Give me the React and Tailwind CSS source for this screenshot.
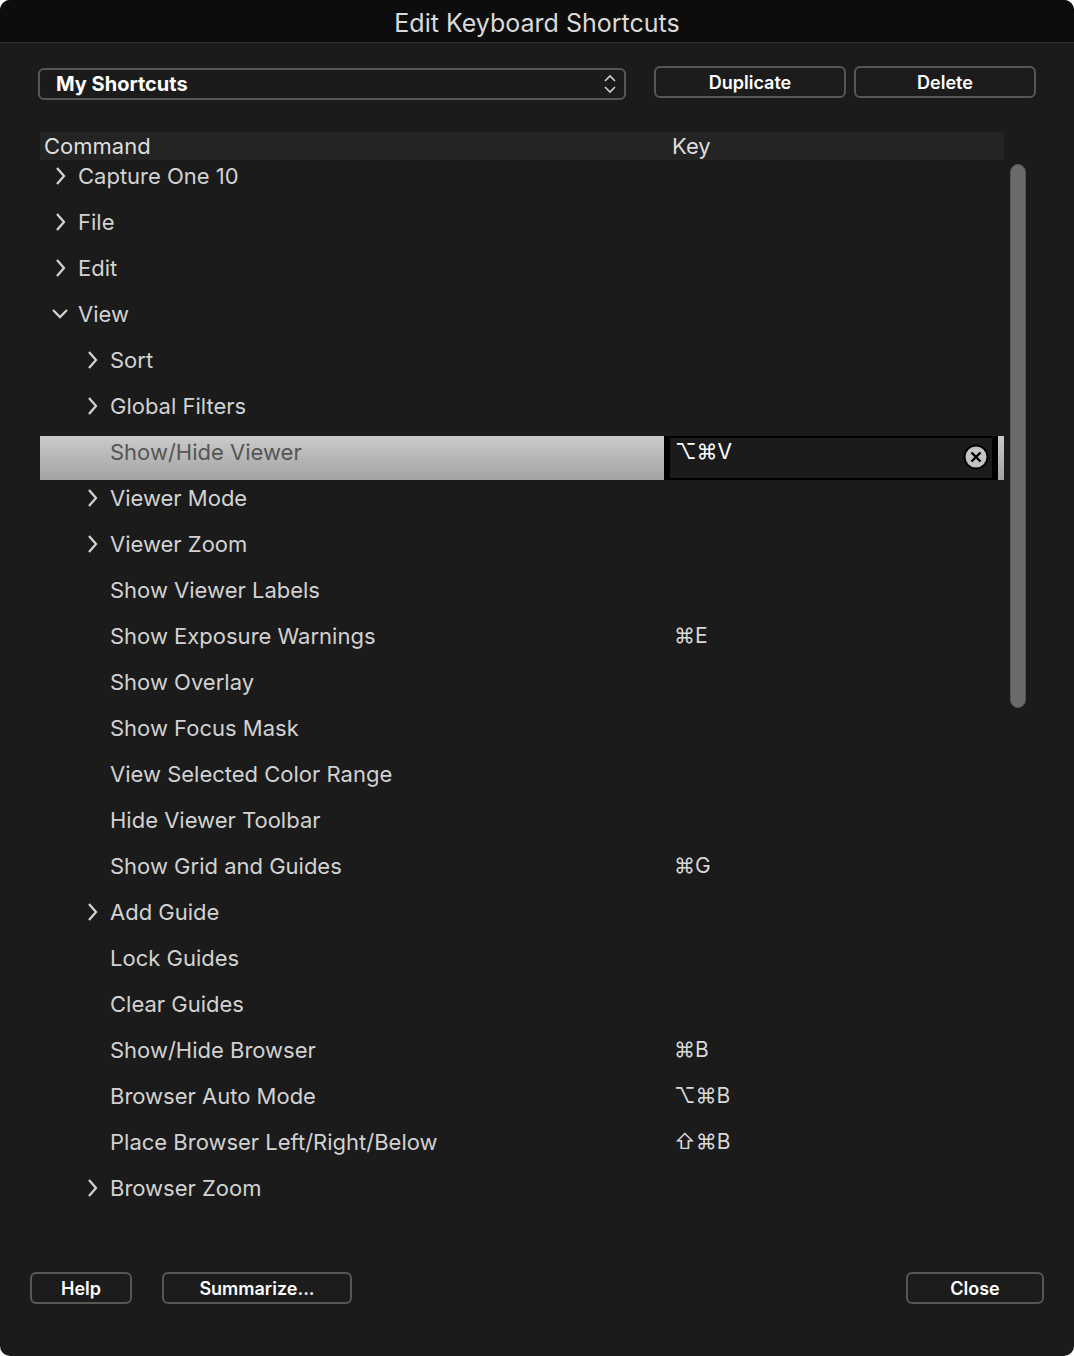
import React from "react";

const FONT = { fontFamily: "Inter, 'DejaVu Sans', sans-serif" };

const rows = [
  { label: "Capture One 10", level: 0, arrow: "right" },
  { label: "File", level: 0, arrow: "right" },
  { label: "Edit", level: 0, arrow: "right" },
  { label: "View", level: 0, arrow: "down" },
  { label: "Sort", level: 1, arrow: "right" },
  { label: "Global Filters", level: 1, arrow: "right" },
  { label: "Show/Hide Viewer", level: 1, key: "⌥⌘V", selected: true },
  { label: "Viewer Mode", level: 1, arrow: "right" },
  { label: "Viewer Zoom", level: 1, arrow: "right" },
  { label: "Show Viewer Labels", level: 1 },
  { label: "Show Exposure Warnings", level: 1, key: "⌘E" },
  { label: "Show Overlay", level: 1 },
  { label: "Show Focus Mask", level: 1 },
  { label: "View Selected Color Range", level: 1 },
  { label: "Hide Viewer Toolbar", level: 1 },
  { label: "Show Grid and Guides", level: 1, key: "⌘G" },
  { label: "Add Guide", level: 1, arrow: "right" },
  { label: "Lock Guides", level: 1 },
  { label: "Clear Guides", level: 1 },
  { label: "Show/Hide Browser", level: 1, key: "⌘B" },
  { label: "Browser Auto Mode", level: 1, key: "⌥⌘B" },
  { label: "Place Browser Left/Right/Below", level: 1, key: "⇧⌘B" },
  { label: "Browser Zoom", level: 1, arrow: "right" },
];

function Chevron({ dir }) {
  if (dir === "down") {
    return (
      <svg width="20" height="14" viewBox="0 0 20 14" className="-ml-[3px]">
        <polyline points="2,3 9,10 16,3" fill="none" stroke="#d2d2d2" strokeWidth="2.3" />
      </svg>
    );
  }
  return (
    <svg width="14" height="20" viewBox="0 0 14 20">
      <polyline points="3,2 10,10 3,18" fill="none" stroke="#d2d2d2" strokeWidth="2.3" />
    </svg>
  );
}

function Row({ row }) {
  const indent = row.level === 0 ? "pl-[14px]" : "pl-[46px]";
  if (row.selected) {
    return (
      <div className="h-[46px]">
        <div className="flex h-[44px] bg-gradient-to-b from-[#cbcbcb] to-[#a2a2a2]">
          <div className={`flex w-[624px] items-start ${indent}`}>
            <div className="w-[24px]" />
            <span className="text-[22px] leading-[32px] text-[#555]">{row.label}</span>
          </div>
          <div className="mr-[6px] flex flex-1 items-start justify-between border-x-[6px] border-y-2 border-black bg-[#1b1b1b] pl-[5px] pr-[3px]">
            <span className="text-[21px] leading-[28px] text-white">{row.key}</span>
            <svg width="26" height="26" viewBox="0 0 26 26" className="mt-[6px]">
              <circle cx="13" cy="13" r="11.5" fill="#c4c4c4" stroke="#000" strokeWidth="2" />
              <line x1="8.5" y1="8.5" x2="17.5" y2="17.5" stroke="#000" strokeWidth="2.4" />
              <line x1="17.5" y1="8.5" x2="8.5" y2="17.5" stroke="#000" strokeWidth="2.4" />
            </svg>
          </div>
        </div>
      </div>
    );
  }
  return (
    <div className="flex h-[46px]">
      <div className={`flex w-[624px] items-start ${indent}`}>
        <div className="flex h-[32px] w-[24px] items-center">
          {row.arrow && <Chevron dir={row.arrow} />}
        </div>
        <span className="text-[22px] leading-[32px] text-[#d2d2d2]">{row.label}</span>
      </div>
      <div className="pl-[10px] text-[21px] leading-[32px] text-[#d8d8d8]">{row.key}</div>
    </div>
  );
}

function Button({ children, className }) {
  return (
    <button
      className={`flex h-[32px] items-center justify-center rounded-[6px] border-2 border-[#575757] bg-[#1c1c1c] text-[18px] font-semibold text-white ${className}`}>
      {children}
    </button>
  );
}

export default function App() {
  return (
    <div className="h-[1356px] w-[1074px] bg-white" style={FONT}>
      <div className="flex h-full flex-col overflow-hidden rounded-[10px] bg-[#1b1b1b]">
        {/* title bar */}
        <div className="flex h-[43px] items-center justify-center border-b border-[#2e2e2e] bg-[#0d0d0d] pt-[5px]">
          <span className="text-[25px] text-[#dadada]">Edit Keyboard Shortcuts</span>
        </div>

        {/* set picker */}
        <div className="mt-[23px] flex items-start pl-[38px]">
          <div className="mt-[2px] flex h-[32px] w-[588px] items-center justify-between rounded-[6px] border-2 border-[#575757] pl-[16px] pr-[6px]">
            <span className="text-[20px] font-bold text-white">My Shortcuts</span>
            <svg width="16" height="22" viewBox="0 0 16 22">
              <polyline points="3,8 8,3 13,8" fill="none" stroke="#cfcfcf" strokeWidth="1.6" />
              <polyline points="3,14 8,19 13,14" fill="none" stroke="#cfcfcf" strokeWidth="1.6" />
            </svg>
          </div>
          <Button className="ml-[28px] w-[192px]">Duplicate</Button>
          <Button className="ml-[8px] w-[182px]">Delete</Button>
        </div>

        {/* table */}
        <div className="mt-[32px] flex items-start pl-[40px]">
          <div className="w-[964px]">
            <div className="flex h-[28px] items-center bg-[#242424]">
              <div className="w-[624px] pl-[4px] text-[22px] text-[#dedede]">Command</div>
              <div className="pl-[8px] text-[22px] text-[#dedede]">Key</div>
            </div>
            {rows.map((row) => (
              <Row key={row.label} row={row} />
            ))}
          </div>
          <div className="ml-[6px] mt-[32px] h-[544px] w-[16px] rounded-full border border-[#555] bg-[#6b6b6b]" />
        </div>

        {/* footer */}
        <div className="mt-auto mb-[52px] flex items-center pl-[30px] pr-[30px]">
          <Button className="w-[102px]">Help</Button>
          <Button className="ml-[30px] w-[190px]">Summarize...</Button>
          <Button className="ml-auto w-[138px]">Close</Button>
        </div>
      </div>
    </div>
  );
}
